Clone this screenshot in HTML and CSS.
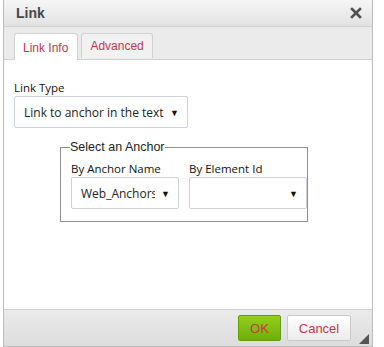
FILE: index.html
```html
<!DOCTYPE html>
<html lang="en">
<head>
  <meta charset="UTF-8">
  <meta name="viewport" content="width=device-width, initial-scale=1.0">
  <title>Link</title>
  <link rel="stylesheet" href="styles.css">
</head>
<body>
  <div class="dialog">
    <div class="dialog-title">
      <span>Link</span>
      <svg class="close" width="12" height="12" viewBox="0 0 12 12">
        <path d="M2 2L10 10M10 2L2 10" stroke="#505050" stroke-width="2.6" stroke-linecap="square"/>
      </svg>
    </div>
    <div class="tabs">
      <div class="tab active">Link Info</div>
      <div class="tab">Advanced</div>
    </div>
    <div class="content">
      <label class="field-label">Link Type</label>
      <div class="select wide">
        <span>Link to anchor in the text</span>
        <span class="arrow">&#9660;</span>
      </div>
      <fieldset class="anchor-box">
        <legend>Select an Anchor</legend>
        <div class="anchor-row">
          <div class="anchor-col">
            <label class="field-label">By Anchor Name</label>
            <div class="select name">
              <span class="clip">Web_Anchors</span>
              <span class="arrow">&#9660;</span>
            </div>
          </div>
          <div class="anchor-col">
            <label class="field-label">By Element Id</label>
            <div class="select elid">
              <span></span>
              <span class="arrow">&#9660;</span>
            </div>
          </div>
        </div>
      </fieldset>
    </div>
    <div class="footer">
      <button class="btn ok">OK</button>
      <button class="btn cancel">Cancel</button>
      <span class="resize"></span>
    </div>
  </div>
</body>
</html>
```

FILE: styles.css
```css
body {
  margin: 0;
  background: #fff;
  font-family: "Liberation Sans", Arial, sans-serif;
}
.dialog {
  margin-left: 3px;
  width: 370px;
  height: 347px;
  border: 1px solid #bcbcbc;
  border-top: none;
  display: flex;
  flex-direction: column;
  background: #fff;
  box-sizing: border-box;
}
.dialog-title {
  height: 27px;
  display: flex;
  align-items: center;
  justify-content: space-between;
  padding: 0 10px 0 12px;
  font-weight: bold;
  font-size: 14px;
  color: #474747;
  background: linear-gradient(#f6f6f6, #e2e2e2);
  border-bottom: 1px solid #cfcfcf;
  box-sizing: border-box;
}
.tabs {
  height: 33px;
  display: flex;
  align-items: flex-end;
  gap: 3px;
  padding-left: 10px;
  background: #ebebeb;
  border-bottom: 1px solid #d1d1d1;
  box-sizing: border-box;
}
.tab {
  height: 25px;
  padding: 0 8px;
  line-height: 24px;
  font-size: 12px;
  color: #c8374a;
  background: #f1f1f1;
  border: 1px solid #d1d1d1;
  border-bottom: none;
  border-radius: 3px 3px 0 0;
  box-sizing: border-box;
  margin-bottom: 1px;
}
.tab.active {
  height: 27px;
  line-height: 28px;
  padding: 0 9px 0 8px;
  background: #fff;
  margin-bottom: -1px;
}
.content {
  flex: 1;
  padding: 20px 10px 0 10px;
}
.field-label {
  display: block;
  font-family: "Open Sans", "Liberation Sans", sans-serif;
  font-size: 11.5px;
  line-height: 15px;
  color: #111;
  margin-bottom: 1px;
}
.select {
  display: flex;
  align-items: center;
  justify-content: space-between;
  height: 32px;
  padding: 0 8px 0 9px;
  border: 1px solid #cdd2d8;
  border-radius: 2px;
  box-sizing: border-box;
  font-family: "Open Sans", "Liberation Sans", sans-serif;
  font-size: 12px;
  color: #222;
  background: #fff;
}
.select .arrow {
  font-size: 9px;
  color: #111;
}
.wide {
  width: 174px;
}
.name {
  width: 108px;
}
.elid {
  width: 118px;
}
.clip {
  width: 74px;
  overflow: hidden;
  white-space: nowrap;
}
.anchor-box {
  margin: 12px 0 0 46px;
  width: 209px;
  padding: 0 0 12px 10px;
  border: 1px solid #8f8f8f;
  box-sizing: border-box;
}
.anchor-box legend {
  font-size: 12.5px;
  color: #222;
  padding: 0;
  margin-left: -1px;
}
.anchor-row {
  display: flex;
  gap: 10px;
  margin-top: 7px;
}
.footer {
  height: 37px;
  display: flex;
  align-items: center;
  justify-content: flex-end;
  gap: 6px;
  padding-right: 21px;
  position: relative;
  background: linear-gradient(#ebebeb, #dcdcdc);
  border-top: 1px solid #cfcfcf;
  box-sizing: border-box;
}
.btn {
  height: 26px;
  font-family: "Liberation Sans", Arial, sans-serif;
  font-size: 13px;
  color: #c8374a;
  border-radius: 2px;
  cursor: pointer;
}
.ok {
  width: 43px;
  border: 1px solid #5e9e0b;
  background: linear-gradient(#95cf1a, #6eae0a);
}
.cancel {
  width: 64px;
  border: 1px solid #c9c9c9;
  background: linear-gradient(#ffffff, #ececec);
}
.resize {
  position: absolute;
  right: 3px;
  bottom: 2px;
  width: 0;
  height: 0;
  border-left: 10px solid transparent;
  border-bottom: 10px solid #555;
}
```
